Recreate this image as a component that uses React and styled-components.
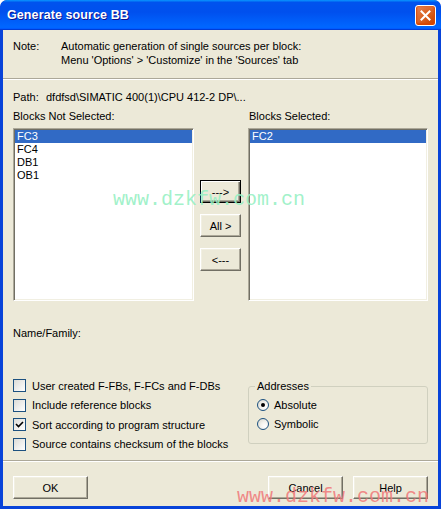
import React from "react";
import styled, { createGlobalStyle } from "styled-components";

const GlobalStyle = createGlobalStyle`
  html, body {
    margin: 0;
    padding: 0;
    background: #ffffff;
  }
  * {
    box-sizing: border-box;
  }
`;

const Window = styled.div`
  position: relative;
  width: 441px;
  height: 509px;
  display: flex;
  flex-direction: column;
  background: #0843d9;
  border-radius: 7px 7px 0 0;
  font-family: "Liberation Sans", Arial, sans-serif;
  font-size: 11px;
  color: #000;
  overflow: hidden;
`;

const TitleBar = styled.div`
  height: 30px;
  flex: none;
  display: flex;
  align-items: center;
  justify-content: space-between;
  padding: 0 5px 0 7px;
  background: linear-gradient(
    180deg,
    #0997ff,
    #0053ee 8%,
    #0050ee 40%,
    #0066ff 88%,
    #0066ff 93%,
    #005bff 95%,
    #003dd7 96%,
    #003dd7
  );
  border-radius: 7px 7px 0 0;
`;

const TitleText = styled.span`
  font-family: "Liberation Sans", Arial, sans-serif;
  font-weight: bold;
  font-size: 12.5px;
  color: #fff;
  text-shadow: 1px 1px #0f1089;
  letter-spacing: 0.1px;
`;

const CloseButton = styled.div`
  width: 21px;
  height: 21px;
  border: 1px solid #fff;
  border-radius: 3px;
  background: radial-gradient(circle at 90% 90%, #cc4600 0%, #dc6527 55%, #e58a5f 100%);
  display: flex;
  align-items: center;
  justify-content: center;
  box-shadow: inset 0 -1px 2px 1px #da4600;
`;

const Body = styled.div`
  flex: 1;
  margin: 0 3px 3px 3px;
  background: #ece9d8;
  display: flex;
  flex-direction: column;
  line-height: 14px;
`;

const NoteRow = styled.div`
  display: flex;
  padding: 9px 0 0 10px;
`;

const NoteLabel = styled.div`
  width: 48px;
  flex: none;
`;

const Separator = styled.div`
  margin-top: ${(p) => p.$top}px;
  height: 2px;
  border-top: 1px solid #aca899;
  border-bottom: 1px solid #ffffff;
`;

const PathRow = styled.div`
  display: flex;
  margin-top: 10px;
  padding-left: 10px;
  white-space: nowrap;
`;

const PathLabel = styled.div`
  width: 33px;
  flex: none;
`;

const ListsRow = styled.div`
  display: flex;
  margin-top: 5px;
  padding-left: 10px;
`;

const ListColumn = styled.div`
  width: ${(p) => p.$width}px;
  display: flex;
  flex-direction: column;
  gap: 5px;
`;

const ColumnLabel = styled.div`
  padding-left: ${(p) => (p.$indent ? 1 : 0)}px;
  height: 14px;
`;

const ListBox = styled.div`
  height: 173px;
  background: #fff;
  border: 1px solid;
  border-color: #aca899 #ffffff #ffffff #aca899;
  box-shadow: inset 1px 1px #716f64, inset -1px -1px #f1efe2;
  padding: 1px;
  display: flex;
  flex-direction: column;
`;

const ListItem = styled.div`
  height: 13px;
  line-height: 13px;
  padding-left: 2px;
  background: ${(p) => (p.$selected ? "#316ac5" : "transparent")};
  color: ${(p) => (p.$selected ? "#fff" : "#000")};
`;

const ButtonColumn = styled.div`
  width: 41px;
  margin: 0 7px 0 6px;
  padding-top: 71px;
  display: flex;
  flex-direction: column;
  gap: 11px;
`;

const Button = styled.div`
  width: ${(p) => p.$width || 41}px;
  height: ${(p) => p.$height || 23}px;
  display: flex;
  align-items: center;
  justify-content: center;
  background: #ece9d8;
  border: 1px solid;
  border-color: ${(p) =>
    p.$default ? "#000" : "#ffffff #716f64 #716f64 #ffffff"};
  box-shadow: ${(p) =>
    p.$default
      ? "inset 1px 1px #fff, inset -1px -1px #716f64, inset -2px -2px #aca899"
      : "inset -1px -1px #aca899, inset 1px 1px #f1efe2"};
  line-height: 14px;
  white-space: nowrap;
`;

const NameRow = styled.div`
  margin-top: 25px;
  padding-left: 10px;
`;

const OptionsRow = styled.div`
  display: flex;
  align-items: flex-start;
  margin-top: 36px;
  padding-left: 10px;
  height: 78px;
`;

const CheckList = styled.div`
  width: 235px;
  display: flex;
  flex-direction: column;
`;

const CheckRow = styled.div`
  height: 19.5px;
  display: flex;
  align-items: center;
  gap: 6px;
  white-space: nowrap;
`;

const CheckBox = styled.div`
  width: 13px;
  height: 13px;
  flex: none;
  border: 1px solid #1c5180;
  background: linear-gradient(135deg, #dcdcd7 0%, #ffffff 100%);
  display: flex;
  align-items: center;
  justify-content: center;
`;

const GroupBox = styled.fieldset`
  width: 180px;
  margin: 3px 0 0 0;
  padding: 2px 8px 10px 8px;
  border: 1px solid #d0d0bf;
  border-radius: 3px;
  min-width: 0;
`;

const GroupLegend = styled.legend`
  padding: 0 2px;
  margin-left: -2px;
  line-height: 14px;
  color: #000;
`;

const RadioRow = styled.div`
  height: 19px;
  display: flex;
  align-items: center;
  gap: 5px;
`;

const Radio = styled.div`
  width: 12px;
  height: 12px;
  flex: none;
  border-radius: 50%;
  border: 1px solid #1c5180;
  background: radial-gradient(circle at 70% 70%, #ffffff 0%, #f4f3ee 40%, #d6d5cb 100%);
  display: flex;
  align-items: center;
  justify-content: center;
`;

const RadioDot = styled.div`
  width: 4px;
  height: 4px;
  border-radius: 50%;
  background: #000;
`;

const FooterRow = styled.div`
  display: flex;
  justify-content: space-between;
  margin-top: 14px;
  padding: 0 10px;
`;

const FooterGroup = styled.div`
  display: flex;
  gap: 10px;
`;

const Watermark = styled.span`
  position: absolute;
  left: ${(p) => p.$left}px;
  top: ${(p) => p.$top}px;
  font-family: "Liberation Mono", "Courier New", monospace;
  font-size: 20px;
  line-height: 20px;
  color: ${(p) => p.$color};
  pointer-events: none;
  white-space: nowrap;
`;

const CloseIcon = () => (
  <svg width="11" height="11" viewBox="0 0 11 11">
    <path
      d="M1.5 1.5 L9.5 9.5 M9.5 1.5 L1.5 9.5"
      stroke="#fff"
      strokeWidth="2"
      strokeLinecap="square"
    />
  </svg>
);

const CheckIcon = () => (
  <svg width="9" height="9" viewBox="0 0 9 9">
    <path d="M1 4 L3.5 6.5 L8 2" stroke="#000" strokeWidth="1.6" fill="none" />
  </svg>
);

const options = [
  { label: "User created F-FBs, F-FCs and F-DBs", checked: false },
  { label: "Include reference blocks", checked: false },
  { label: "Sort according to program structure", checked: true },
  { label: "Source contains checksum of the blocks", checked: false },
];

export default function App() {
  const notSelected = ["FC3", "FC4", "DB1", "OB1"];
  const selected = ["FC2"];

  return (
    <>
      <GlobalStyle />
      <Window>
        <TitleBar>
          <TitleText>Generate source BB</TitleText>
          <CloseButton>
            <CloseIcon />
          </CloseButton>
        </TitleBar>
        <Body>
          <NoteRow>
            <NoteLabel>Note:</NoteLabel>
            <div>
              <div>Automatic generation of single sources per block:</div>
              <div>Menu 'Options' &gt; 'Customize' in the 'Sources' tab</div>
            </div>
          </NoteRow>
          <Separator $top={11} />

          <PathRow>
            <PathLabel>Path:</PathLabel>
            <span>{"dfdfsd\\SIMATIC 400(1)\\CPU 412-2 DP\\..."}</span>
          </PathRow>

          <ListsRow>
            <ListColumn $width={181}>
              <ColumnLabel>Blocks Not Selected:</ColumnLabel>
              <ListBox>
                {notSelected.map((b, i) => (
                  <ListItem key={b} $selected={i === 0}>
                    {b}
                  </ListItem>
                ))}
              </ListBox>
            </ListColumn>
            <ButtonColumn>
              <Button $default>---&gt;</Button>
              <Button>All &gt;</Button>
              <Button>&lt;---</Button>
            </ButtonColumn>
            <ListColumn $width={180}>
              <ColumnLabel $indent>Blocks Selected:</ColumnLabel>
              <ListBox>
                {selected.map((b) => (
                  <ListItem key={b} $selected>
                    {b}
                  </ListItem>
                ))}
              </ListBox>
            </ListColumn>
          </ListsRow>

          <NameRow>Name/Family:</NameRow>

          <OptionsRow>
            <CheckList>
              {options.map((o) => (
                <CheckRow key={o.label}>
                  <CheckBox>{o.checked && <CheckIcon />}</CheckBox>
                  <span>{o.label}</span>
                </CheckRow>
              ))}
            </CheckList>
            <GroupBox>
              <GroupLegend>Addresses</GroupLegend>
              <RadioRow>
                <Radio>
                  <RadioDot />
                </Radio>
                <span>Absolute</span>
              </RadioRow>
              <RadioRow>
                <Radio />
                <span>Symbolic</span>
              </RadioRow>
            </GroupBox>
          </OptionsRow>

          <Separator $top={6} />

          <FooterRow>
            <Button $width={75}>OK</Button>
            <FooterGroup>
              <Button $width={75}>Cancel</Button>
              <Button $width={75}>Help</Button>
            </FooterGroup>
          </FooterRow>
        </Body>

        <Watermark $left={113} $top={190} $color="rgba(150, 240, 195, 0.9)">
          www.dzkfw.com.cn
        </Watermark>
        <Watermark $left={237} $top={487} $color="rgba(240, 120, 120, 0.85)">
          www.dzkfw.com.cn
        </Watermark>
      </Window>
    </>
  );
}
